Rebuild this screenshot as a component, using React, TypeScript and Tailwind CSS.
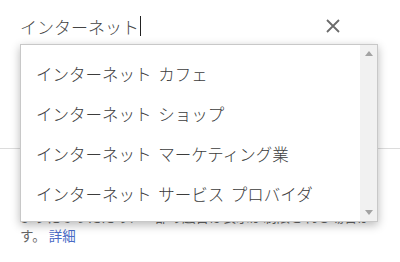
import React from "react";

const jp = { fontFamily: '"Noto Sans CJK JP", "Noto Sans", sans-serif' };

export default function App() {
  const items = [
    "インターネット カフェ",
    "インターネット ショップ",
    "インターネット マーケティング業",
    "インターネット サービス プロバイダ",
  ];
  return (
    <div className="relative w-[400px] h-[262px] bg-white overflow-hidden" style={jp}>
      {/* underlying page */}
      <div className="flex flex-col">
        <div className="flex items-center h-[52px] pl-[20px] pr-[59px]">
          <div className="flex-1 flex items-center text-[17px] text-[#444] leading-none font-light">
            <span>インターネット</span>
            <span className="w-px h-[20px] bg-[#222] ml-[1px]" />
          </div>
          <svg width="16" height="16" viewBox="0 0 16 16" className="shrink-0">
            <path d="M2 2 L14 14 M14 2 L2 14" stroke="#6b6b6b" strokeWidth="1.8" />
          </svg>
        </div>
        <div className="h-[96px]" />
        <div className="h-px bg-[#dcdcdc]" />
        <div className="h-[58px]" />
        <div className="px-[20px] text-[13.5px] leading-[19px] text-[#666]">
          <div className="whitespace-nowrap">ようになったため、一部の広告は表示が制限される場合が</div>
          <div>
            す。 <span className="text-[#4a6bc6]">詳細</span>
          </div>
        </div>
      </div>

      {/* dropdown overlay */}
      <div className="absolute left-[20px] top-[44px] w-[358px] h-[178px] bg-white border border-[#c8c8c8] shadow-[0_3px_9px_rgba(0,0,0,0.28)] flex">
        <div className="flex-1 flex flex-col pt-[9px]">
          {items.map((t) => (
            <div
              key={t}
              className="h-[40px] flex items-center pl-[15px] text-[16.5px] text-[#3c3c3c] font-light [word-spacing:3px]"
            >
              {t}
            </div>
          ))}
        </div>
        <div className="w-[17px] bg-[#f1f1f1] flex flex-col items-center justify-between py-[6px]">
          <svg width="8" height="5" viewBox="0 0 8 5">
            <path d="M0 5 L4 0 L8 5 Z" fill="#a3a3a3" />
          </svg>
          <svg width="8" height="5" viewBox="0 0 8 5">
            <path d="M0 0 L4 5 L8 0 Z" fill="#a3a3a3" />
          </svg>
        </div>
      </div>
    </div>
  );
}
